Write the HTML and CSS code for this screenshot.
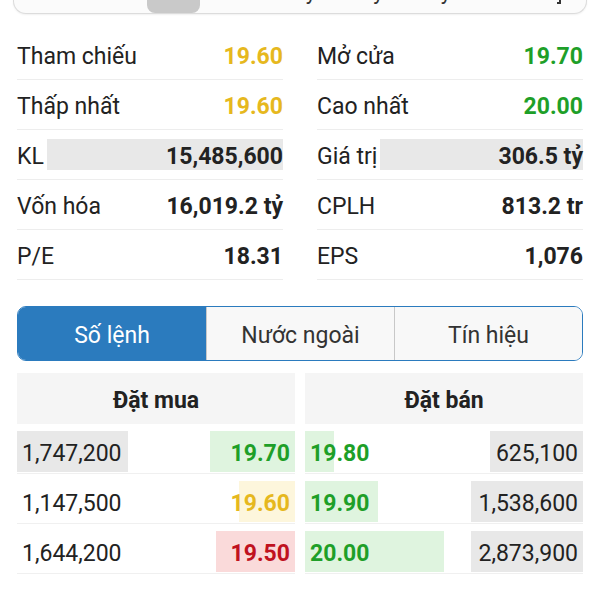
FILE: index.html
```html
<!DOCTYPE html>
<html lang="vi">
<head>
    <meta charset="UTF-8">
    <meta name="viewport" content="width=device-width, initial-scale=1.0">
    <title>Thông tin cổ phiếu</title>
    <link rel="stylesheet" href="styles.css">
</head>
<body>
    <div class="range-bar">
        <div class="range-track">
            <div class="range-item">1d</div>
            <div class="range-item">5d</div>
            <div class="range-item active">1m</div>
            <div class="range-item">3m</div>
            <div class="range-item">1y</div>
            <div class="range-item">3y</div>
            <div class="range-item">5y</div>
            <div class="range-item">all</div>
            <div class="range-item range-icon">
                <svg width="14" height="14" viewBox="0 0 14 14"><path d="M2 2h4v2H4v2H2zM12 12H8v-2h2V8h2z" fill="#333"/></svg>
            </div>
        </div>
    </div>

    <section class="stats">
        <div class="stat"><span>Tham chiếu</span><span class="stat-value ref">19.60</span></div>
        <div class="stat"><span>Mở cửa</span><span class="stat-value up">19.70</span></div>
        <div class="stat"><span>Thấp nhất</span><span class="stat-value ref">19.60</span></div>
        <div class="stat"><span>Cao nhất</span><span class="stat-value up">20.00</span></div>
        <div class="stat"><span>KL</span><span class="stat-value bar">15,485,600</span></div>
        <div class="stat"><span>Giá trị</span><span class="stat-value bar">306.5 tỷ</span></div>
        <div class="stat"><span>Vốn hóa</span><span class="stat-value">16,019.2 tỷ</span></div>
        <div class="stat"><span>CPLH</span><span class="stat-value">813.2 tr</span></div>
        <div class="stat"><span>P/E</span><span class="stat-value">18.31</span></div>
        <div class="stat"><span>EPS</span><span class="stat-value">1,076</span></div>
    </section>

    <nav class="tabs">
        <div class="tab active">Số lệnh</div>
        <div class="tab">Nước ngoài</div>
        <div class="tab">Tín hiệu</div>
    </nav>

    <section class="book">
        <div class="book-side">
            <div class="book-head">Đặt mua</div>
            <div class="book-row">
                <div class="cell left vol" style="--w: 111px">1,747,200</div>
                <div class="cell right price up" style="--w: 85px">19.70</div>
            </div>
            <div class="book-row">
                <div class="cell left vol">1,147,500</div>
                <div class="cell right price ref" style="--w: 56px">19.60</div>
            </div>
            <div class="book-row">
                <div class="cell left vol">1,644,200</div>
                <div class="cell right price down" style="--w: 79px">19.50</div>
            </div>
        </div>
        <div class="book-side">
            <div class="book-head">Đặt bán</div>
            <div class="book-row">
                <div class="cell left price up" style="--w: 29px">19.80</div>
                <div class="cell right vol" style="--w: 93px">625,100</div>
            </div>
            <div class="book-row">
                <div class="cell left price up" style="--w: 73px">19.90</div>
                <div class="cell right vol" style="--w: 112px">1,538,600</div>
            </div>
            <div class="book-row">
                <div class="cell left price up" style="--w: 139px">20.00</div>
                <div class="cell right vol" style="--w: 112px">2,873,900</div>
            </div>
        </div>
    </section>
</body>
</html>
```

FILE: styles.css
```css
* {
    margin: 0;
    padding: 0;
    box-sizing: border-box;
}

body {
    font-family: Roboto, "Noto Sans", sans-serif;
    font-size: 23px;
    color: #222;
    background: #fff;
}

/* chart range selector, scrolled mostly out of view */
.range-bar {
    margin: -40px 13px 0;
    height: 54px;
    border: 1px solid #dcdcdc;
    border-top: none;
    border-radius: 0 0 13px 13px;
    background: #fbfbfb;
    box-shadow: 0 1px 2px rgba(0, 0, 0, 0.06);
    overflow: hidden;
}

.range-track {
    display: grid;
    grid-template-columns: repeat(8, 67.5px) 1fr;
    margin-left: -13px;
}

.range-item {
    height: 53px;
    padding-top: 22px;
    font-size: 22px;
    line-height: 20px;
    text-align: center;
    color: #333;
}

.range-item.active {
    background: #c9c9c9;
    border-radius: 0 0 8px 8px;
    margin: 0 3.5px 0 11px;
}

.range-icon {
    padding-top: 29px;
    padding-left: 8px;
    text-align: left;
}

/* stats */
.stats {
    display: grid;
    grid-template-columns: 1fr 1fr;
    column-gap: 34px;
    padding: 0 17px;
    margin-top: 16px;
}

.stat {
    display: flex;
    align-items: center;
    justify-content: space-between;
    height: 50px;
    border-bottom: 1px solid #ededed;
}

.stat span {
    padding-top: 4px;
}

.stat-value {
    font-weight: 700;
}

.stat-value.bar {
    flex: 1;
    margin-left: 3px;
    height: 31px;
    line-height: 27px;
    background: #e8e8e8;
    text-align: right;
}

.up { color: #1e9f28; }
.ref { color: #e6b81e; }
.down { color: #c0121f; }

/* tabs */
.tabs {
    margin: 26px 17px 0;
    height: 55px;
    display: grid;
    grid-template-columns: repeat(3, 1fr);
    border: 1.5px solid #2b7bbe;
    border-radius: 9px;
    overflow: hidden;
}

.tab {
    display: flex;
    align-items: center;
    justify-content: center;
    padding-top: 3px;
    background: #f8f8f8;
    color: #333;
}

.tab + .tab {
    border-left: 1px solid #c8c8c8;
}

.tab.active {
    background: #2b7bbe;
    color: #fff;
}

/* order book */
.book {
    margin: 12px 17px 0;
    display: grid;
    grid-template-columns: 1fr 1fr;
    column-gap: 10px;
}

.book-head {
    height: 51px;
    display: flex;
    align-items: center;
    justify-content: center;
    padding-top: 3px;
    background: #f5f5f5;
    font-weight: 700;
}

.book-row {
    display: grid;
    grid-template-columns: 1fr 1fr;
    height: 50px;
    padding-top: 7px;
    border-bottom: 1px solid #f0f0f0;
}

.cell {
    --w: 0px;
    --c: transparent;
    height: 41px;
    line-height: 45px;
    padding: 0 5px;
    white-space: nowrap;
    background-image: linear-gradient(var(--c), var(--c));
    background-repeat: no-repeat;
    background-size: var(--w) 100%;
}

.cell.left {
    text-align: left;
    background-position: left top;
}

.cell.right {
    text-align: right;
    background-position: right top;
}

.vol { --c: #e8e8e8; }
.price { font-weight: 700; }
.price.up { --c: #dff4df; }
.price.ref { --c: #fdf6dc; }
.price.down { --c: #fadada; }
```
